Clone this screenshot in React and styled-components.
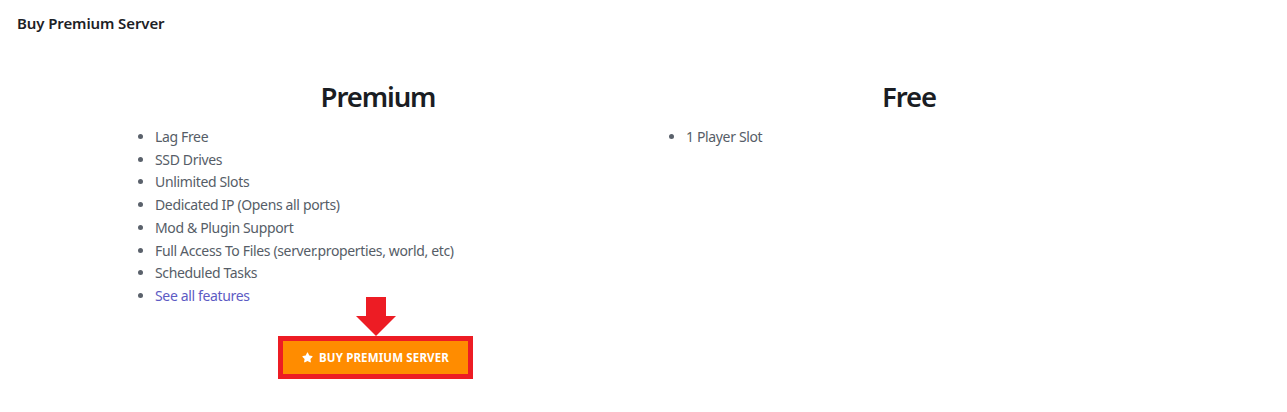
import React from "react";
import styled, { createGlobalStyle } from "styled-components";
import { FaStar } from "react-icons/fa";

const GlobalStyle = createGlobalStyle`
  body {
    margin: 0;
    background: #ffffff;
    font-family: "Noto Sans", "Open Sans", Arial, sans-serif;
    color: #1f2328;
  }
`;

const premiumFeatures = [
  "Lag Free",
  "SSD Drives",
  "Unlimited Slots",
  "Dedicated IP (Opens all ports)",
  "Mod & Plugin Support",
  "Full Access To Files (server.properties, world, etc)",
  "Scheduled Tasks",
];

const freeFeatures = ["1 Player Slot"];

export default function App() {
  return (
    <>
      <GlobalStyle />
      <Page>
        {/* page title */}
        <Header>Buy Premium Server</Header>

        <Plans>
          {/* premium column */}
          <Plan>
            <PlanTitle>Premium</PlanTitle>
            <Features>
              {premiumFeatures.map((f) => (
                <li key={f}>{f}</li>
              ))}
              <li>
                <FeatureLink href="#">See all features</FeatureLink>
              </li>
            </Features>
            <ButtonRow>
              <Highlight>
                <Arrow width="40" height="39" viewBox="0 0 40 39">
                  <polygon
                    points="10,0 30,0 30,19 40,19 20,39 0,19 10,19"
                    fill="#ed1c24"
                  />
                </Arrow>
                <BuyButton>
                  <FaStar size={11} />
                  Buy Premium Server
                </BuyButton>
              </Highlight>
            </ButtonRow>
          </Plan>

          {/* free column */}
          <Plan>
            <PlanTitle>Free</PlanTitle>
            <Features>
              {freeFeatures.map((f) => (
                <li key={f}>{f}</li>
              ))}
            </Features>
          </Plan>
        </Plans>
      </Page>
    </>
  );
}

const Page = styled.div`
  width: 100%;
  min-height: 412px;
`;

const Header = styled.h1`
  margin: 0;
  padding: 13px 17px 0;
  font-size: 15px;
  line-height: 20px;
  font-weight: 600;
  letter-spacing: -0.1px;
  color: #1d2126;
`;

const Plans = styled.div`
  max-width: 1062px;
  margin: 47px auto 0;
  display: grid;
  grid-template-columns: 1fr 1fr;
`;

const Plan = styled.div`
  padding: 0 12px;
`;

const PlanTitle = styled.h2`
  margin: 0 0 12px;
  text-align: center;
  font-size: 27.5px;
  line-height: 34px;
  font-weight: 600;
  letter-spacing: -1.1px;
  color: #1a1d23;
`;

const Features = styled.ul`
  margin: 0;
  padding-left: 30.5px;
  font-size: 14px;
  line-height: 22.7px;
  letter-spacing: -0.35px;
  color: #565d67;

  li::marker {
    color: #5a616b;
  }
`;

const FeatureLink = styled.a`
  color: #5d5bc4;
  text-decoration: none;
`;

const ButtonRow = styled.div`
  display: flex;
  justify-content: center;
  margin-top: 28px;
  padding-right: 5px;
`;

const Highlight = styled.div`
  position: relative;
  border: 5px solid #ed1c24;
`;

const Arrow = styled.svg`
  position: absolute;
  left: 50%;
  bottom: calc(100% + 5px);
  transform: translateX(-50%);
`;

const BuyButton = styled.button`
  display: flex;
  align-items: center;
  justify-content: center;
  gap: 6px;
  width: 185px;
  height: 33px;
  padding: 0;
  border: none;
  background: #ff8c00;
  color: #ffffff;
  font-family: "Noto Sans", "Open Sans", Arial, sans-serif;
  font-size: 11.5px;
  font-weight: 700;
  text-transform: uppercase;
  letter-spacing: 0.15px;
  cursor: pointer;
`;
